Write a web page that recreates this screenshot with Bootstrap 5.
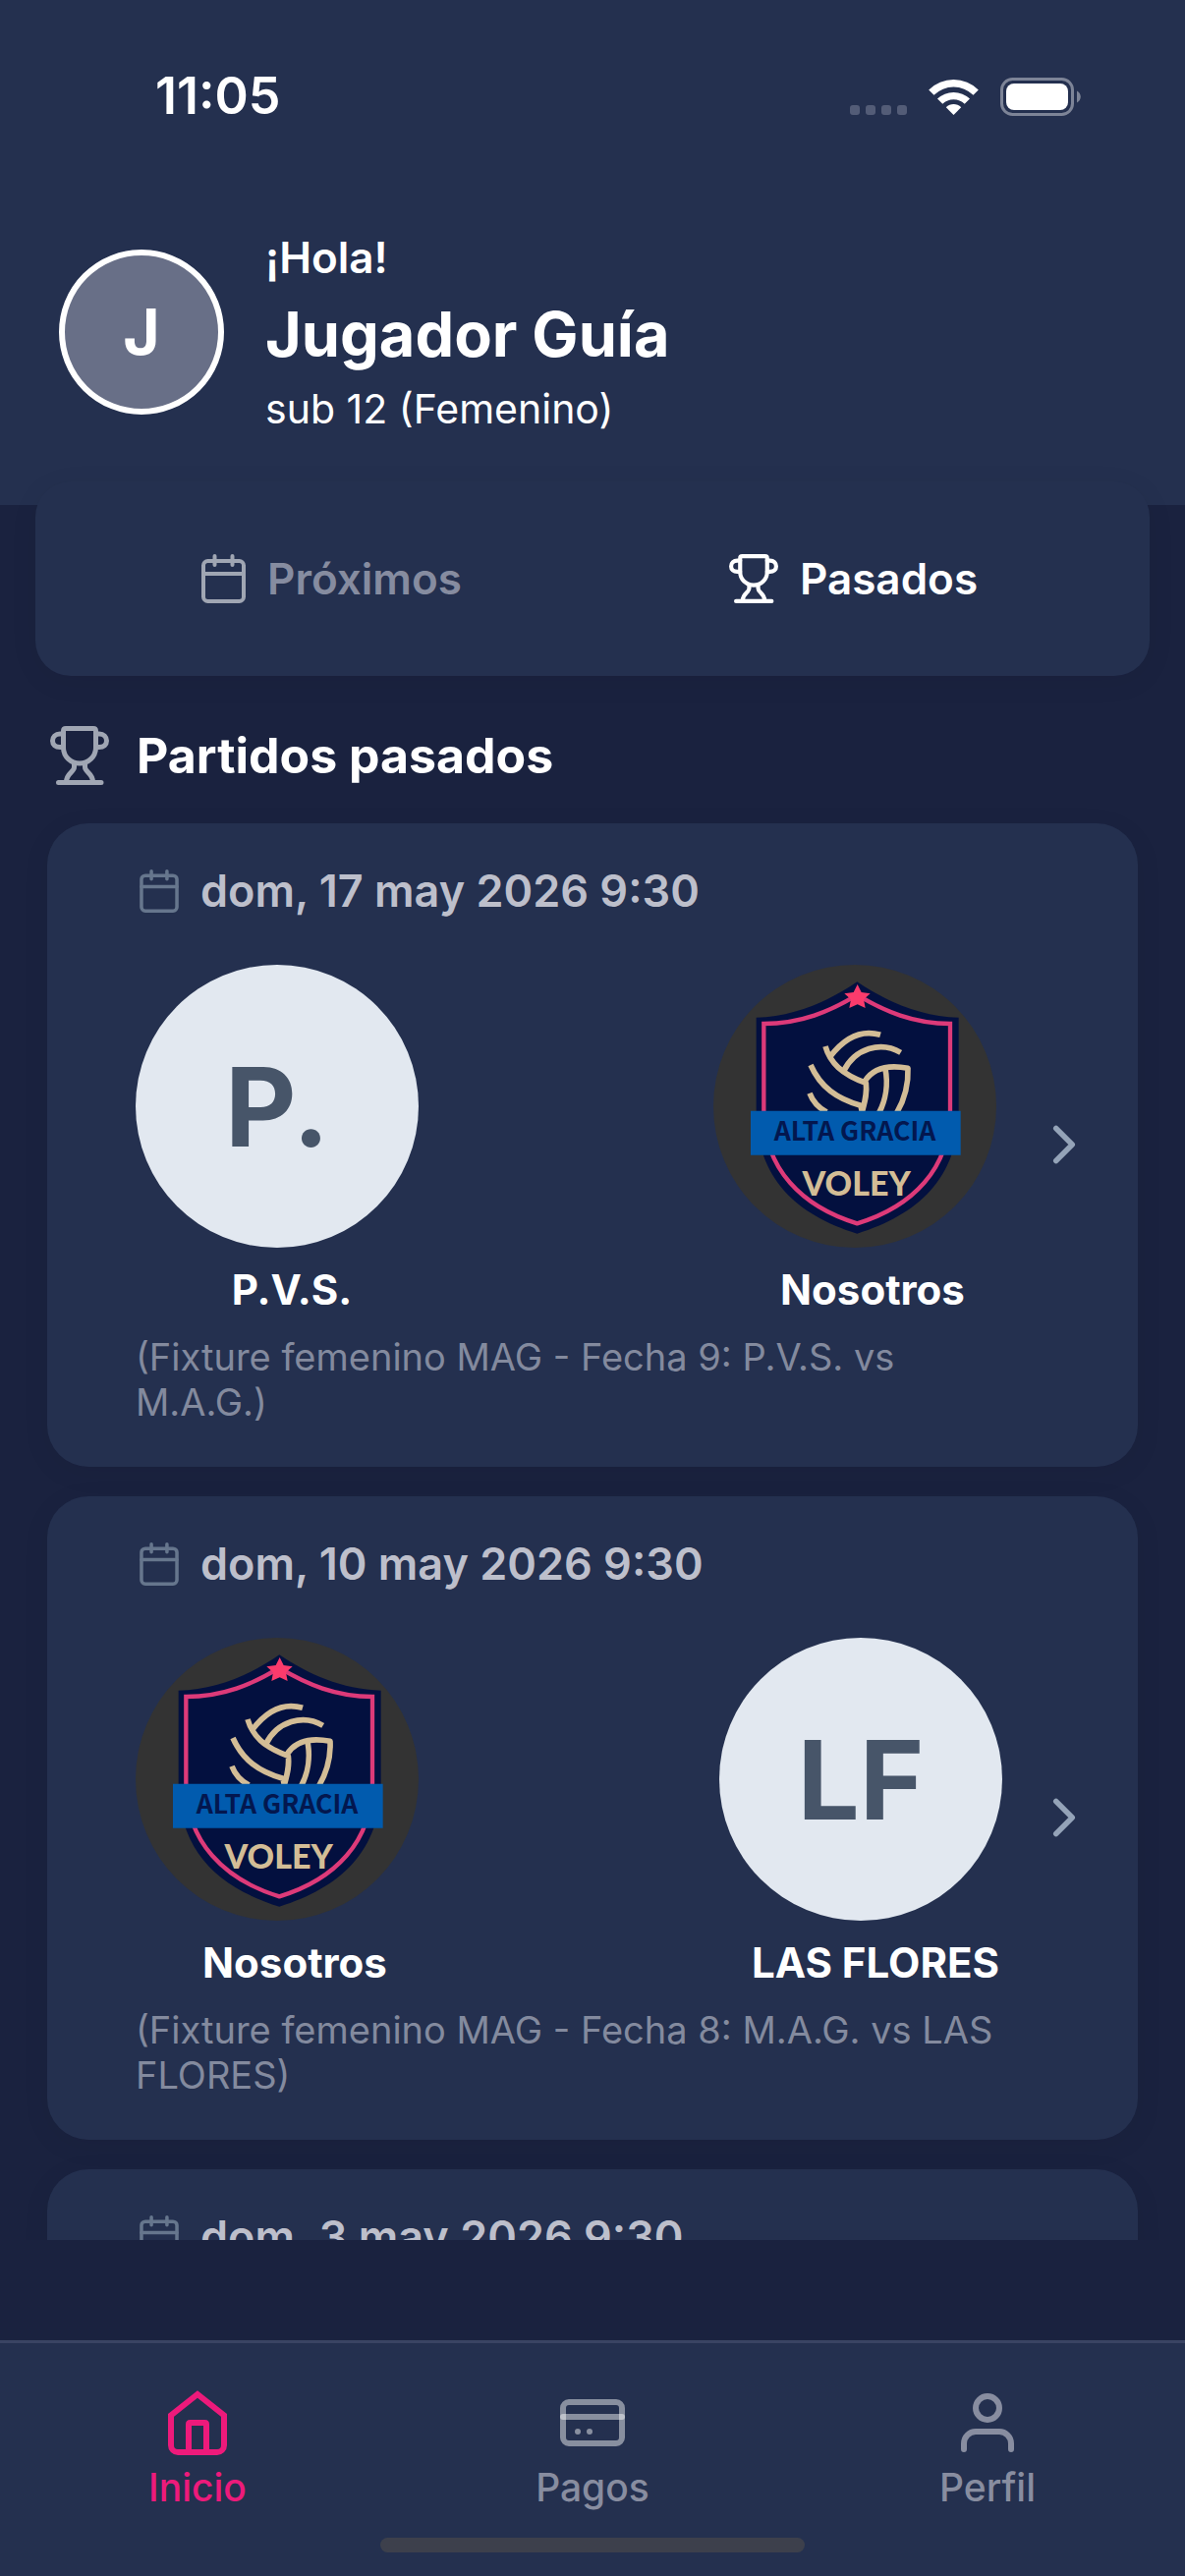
<!DOCTYPE html>
<html lang="es">
<head>
<meta charset="utf-8">
<meta name="viewport" content="width=device-width, initial-scale=1">
<title>Partidos pasados</title>
<link href="https://cdn.jsdelivr.net/npm/bootstrap@5.3.0/dist/css/bootstrap.min.css" rel="stylesheet">
<style>
  body { background: #1a223f; color: #fff; font-family: Inter, "Noto Sans", sans-serif; }
  svg { display: block; flex: none; }
  .surface { background: #24304f; }
  .status-bar { height: 196px; padding: 0 106px 0 158px; }
  .status-time { font-size: 52px; line-height: 60px; font-weight: 600; }
  .status-icons { gap: 22px; }
  .profile { gap: 42px; padding: 39px 60px 73px; }
  .avatar { width: 168px; height: 168px; border: 6px solid #fff; background: #686f87; font-size: 64px; font-weight: 700; }
  .profile-text { gap: 12px; }
  .hello { font-size: 44px; line-height: 54px; font-weight: 600; }
  .player { font-size: 63px; line-height: 78px; font-weight: 700; }
  .category { font-size: 41px; line-height: 50px; }
  .tabs { margin: -24px 36px 0; padding: 0 36px; height: 198px; border-radius: 36px; box-shadow: 0 6px 30px rgba(0, 0, 0, .06); }
  .tab-btn { gap: 22px; font-size: 44px; line-height: 54px; font-weight: 600; color: #868ca0; }
  .tab-btn:hover, .tab-btn.active { color: #fff; }
  .tab-btn svg { color: #a0a6b3; }
  .tab-btn.active svg { color: #fff; }
  .section-title { gap: 28px; padding: 50px 51px 0; }
  .section-title svg { color: #a0a6b3; }
  .section-title h1 { font-size: 50px; line-height: 62px; font-weight: 700; }
  .matches { padding: 38px 48px 0; gap: 30px; margin-bottom: 102px; }
  .match { padding: 42px 42px 43px 90px; border-radius: 42px; color: #fff; box-shadow: 0 6px 30px rgba(0, 0, 0, .06); }
  .match-date { gap: 22px; font-size: 45px; line-height: 54px; font-weight: 600; color: #bdbfcb; padding-left: 4px; margin-bottom: 48px; }
  .match-date svg { color: #66768d; }
  .team { width: 318px; }
  .team-own { width: 324px; }
  .team-logo { width: 288px; height: 288px; margin-bottom: 18px; }
  .team-initials { background: #e2e8f0; color: #475569; font-size: 112px; font-weight: 700; }
  .team-name { font-size: 42px; line-height: 50px; font-weight: 700; }
  .match-note { font-size: 38px; line-height: 46px; color: #838a9e; margin: 20px 24px 0 0; }
  .crest-band { font-family: "Noto Sans CJK SC", "Noto Sans", sans-serif; font-size: 80px; font-weight: 700; fill: #03174f; text-anchor: middle; }
  .crest-sport { font-family: Lato, sans-serif; font-size: 102px; font-weight: 900; fill: #d3bd96; text-anchor: middle; }
  .chevron { color: #94a3b8; }
  .tab-bar { border-top: 3px solid #3a4463; height: 240px; padding-top: 45px; }
  .tab-link { gap: 6px; font-size: 39px; line-height: 48px; font-weight: 500; color: #888da0; }
  .tab-link.active { color: #ed1a7b; }
  .icon-box { height: 72px; }
  .home-indicator { width: 432px; height: 15px; background: #3d404c; bottom: 24px; }
</style>
<script src="https://cdn.jsdelivr.net/npm/bootstrap@5.3.0/dist/js/bootstrap.bundle.min.js"></script>
</head>
<body>
<svg width="0" height="0" class="position-absolute" aria-hidden="true">
  <symbol id="calendar" viewBox="0 0 45 50">
    <g fill="none" stroke="currentColor" stroke-width="4" stroke-linecap="round"><rect x="2" y="7" width="41" height="41" rx="4.500"/><path d="M2 20H43M13.500 2V11M31.500 2V11"/></g>
  </symbol>
  <symbol id="trophy" viewBox="0 0 60 60">
    <g fill="none" stroke="currentColor" stroke-width="5" stroke-linecap="round" stroke-linejoin="round">
      <path d="M13.500 5Q13.500 2.500 16 2.500H44Q46.500 2.500 46.500 5V22C46.500 31 39 38 30 38S13.500 31 13.500 22Z"/>
      <path d="M13.500 8H10C5.500 8 2.500 11 2.500 15S5.500 21.500 10 21.500H13.500M46.500 8H50C54.500 8 57.500 11 57.500 15S54.500 21.500 50 21.500H46.500"/>
      <path d="M24.500 38V42C24.500 47 16.500 48 16.500 57M35.500 38V42C35.500 47 43.500 48 43.500 57M8.500 57.500H52"/>
    </g>
  </symbol>
  <symbol id="chevron" viewBox="0 0 24 24"><path d="M9 18l6-6-6-6" fill="none" stroke="currentColor" stroke-width="2" stroke-linecap="round" stroke-linejoin="round"/></symbol>
  <g id="crest">
    <circle cx="450" cy="468" r="432" fill="#333"/>
    <path d="M457 88C540 145 650 195 767 197V480C767 690 640 800 457 857C274 800 149 690 149 480V197C265 195 375 145 457 88Z" fill="#03103f"/>
    <path d="M457 128C540 178 630 216 741 216V480C741 660 625 775 457 826C290 775 172 660 172 480V216C285 216 375 178 457 128Z" fill="none" stroke="#dd3a79" stroke-width="13"/>
    <path d="M458 96L470 120L497 124L477 142L482 168L458 157L433 168L438 142L418 124L446 120Z" fill="#fb3b6c"/>
    <path d="M360 285C374 335 410 370 484 397C488 430 480 455 472 486L468 466C395 445 345 410 315 342M375 316C410 270 460 230 528 250M415 362C450 290 530 268 590 304M480 392C510 345 560 342 612 352C614 400 600 450 578 488M543 354C552 400 544 450 524 488M312 428C322 455 342 474 364 486" fill="none" stroke="#d3bd96" stroke-width="17" stroke-linejoin="round"/>
    <path d="M132 482H773V617H132Z" fill="#015bae"/>
  </g>
</svg>

<div class="vh-100 d-flex flex-column overflow-hidden">
  <header class="surface flex-shrink-0">
    <div class="status-bar d-flex align-items-center justify-content-between">
      <div class="status-time">11:05</div>
      <div class="status-icons d-flex align-items-end" aria-hidden="true">
        <svg width="58" height="11" viewBox="0 0 58 11" fill="#535c77"><rect width="10" height="10" rx="3"/><rect x="16" width="10" height="10" rx="3"/><rect x="32" width="10" height="10" rx="3"/><rect x="48" width="10" height="10" rx="3"/></svg>
        <svg width="51" height="38" viewBox="0 0 51 38" fill="#fff"><path d="M25.500 37L17.800 29.200C22 25 29 25 33.200 29.200Z"/><path d="M9 20.500A24 24 0 0 1 42 20.500L36.700 25.800A16 16 0 0 0 14.300 25.800Z"/><path d="M.2 11.400A36 36 0 0 1 50.800 11.400L45.500 16.800A28.500 28.500 0 0 0 5.500 16.800Z"/></svg>
        <svg width="82" height="39" viewBox="0 0 82 39"><rect x="1.500" y="1.500" width="72" height="36" rx="11" fill="none" stroke="#7d8497" stroke-width="3"/><rect x="6" y="6" width="63" height="27" rx="8" fill="#fff"/><path d="M78 13.500C83 16 83 23 78 25.500Z" fill="#7d8497"/></svg>
      </div>
    </div>
    <div class="profile d-flex align-items-center">
      <div class="avatar rounded-circle d-flex align-items-center justify-content-center flex-shrink-0">J</div>
      <div class="profile-text d-flex flex-column">
        <div class="hello">¡Hola!</div>
        <div class="player">Jugador Guía</div>
        <div class="category">sub 12 (Femenino)</div>
      </div>
    </div>
  </header>

  <div class="tabs surface d-flex flex-shrink-0 position-relative" role="tablist">
    <button type="button" role="tab" aria-selected="false" class="tab-btn btn border-0 flex-fill w-50 d-flex align-items-center justify-content-center"><svg width="45" height="50"><use href="#calendar"/></svg>Próximos</button>
    <button type="button" role="tab" aria-selected="true" class="tab-btn active btn border-0 flex-fill w-50 d-flex align-items-center justify-content-center"><svg width="50" height="50"><use href="#trophy"/></svg>Pasados</button>
  </div>

  <div class="section-title d-flex align-items-center flex-shrink-0">
    <svg width="60" height="60"><use href="#trophy"/></svg>
    <h1 class="m-0">Partidos pasados</h1>
  </div>

  <main class="matches d-flex flex-column flex-grow-1 overflow-hidden">
    <a href="#" class="match surface d-flex align-items-center flex-shrink-0 text-decoration-none">
      <div class="flex-grow-1">
        <div class="match-date d-flex align-items-center"><svg width="40" height="44"><use href="#calendar"/></svg>dom, 17 may 2026 9:30</div>
        <div class="d-flex justify-content-between">
          <div class="team">
            <div class="team-logo team-initials rounded-circle d-flex align-items-center justify-content-center">P.</div>
            <div class="team-name text-center">P.V.S.</div>
          </div>
          <div class="team team-own">
            <svg class="team-logo" viewBox="18 36 864 864" role="img" aria-label="Alta Gracia Voley"><use href="#crest"/><text class="crest-band" x="450" y="572">ALTA GRACIA</text><text class="crest-sport" x="455" y="740">VOLEY</text></svg>
            <div class="team-name text-center">Nosotros</div>
          </div>
        </div>
        <div class="match-note">(Fixture femenino MAG - Fecha 9: P.V.S. vs M.A.G.)</div>
      </div>
      <svg class="chevron" width="66" height="66"><use href="#chevron"/></svg>
    </a>

    <a href="#" class="match surface d-flex align-items-center flex-shrink-0 text-decoration-none">
      <div class="flex-grow-1">
        <div class="match-date d-flex align-items-center"><svg width="40" height="44"><use href="#calendar"/></svg>dom, 10 may 2026 9:30</div>
        <div class="d-flex justify-content-between">
          <div class="team team-own">
            <svg class="team-logo" viewBox="18 36 864 864" role="img" aria-label="Alta Gracia Voley"><use href="#crest"/><text class="crest-band" x="450" y="572">ALTA GRACIA</text><text class="crest-sport" x="455" y="740">VOLEY</text></svg>
            <div class="team-name text-center">Nosotros</div>
          </div>
          <div class="team">
            <div class="team-logo team-initials rounded-circle d-flex align-items-center justify-content-center">LF</div>
            <div class="team-name text-center">LAS FLORES</div>
          </div>
        </div>
        <div class="match-note">(Fixture femenino MAG - Fecha 8: M.A.G. vs LAS FLORES)</div>
      </div>
      <svg class="chevron" width="66" height="66"><use href="#chevron"/></svg>
    </a>

    <a href="#" class="match surface d-flex align-items-center flex-shrink-0 text-decoration-none">
      <div class="flex-grow-1">
        <div class="match-date d-flex align-items-center"><svg width="40" height="44"><use href="#calendar"/></svg>dom, 3 may 2026 9:30</div>
      </div>
    </a>
  </main>

  <nav class="tab-bar surface d-flex align-items-start flex-shrink-0 position-relative">
    <a href="#" class="tab-link active col-4 d-flex flex-column align-items-center text-decoration-none" aria-current="page">
      <span class="icon-box d-flex align-items-center"><svg width="60" height="66" viewBox="0 0 60 66" fill="none" stroke="currentColor" stroke-width="6"><path d="M30 4L3 25.500V56A7 7 0 0 0 10 63H50A7 7 0 0 0 57 56V25.500Z"/><path d="M21 63V34.500Q21 33 22.500 33H37.500Q39 33 39 34.500V63"/></svg></span>
      Inicio
    </a>
    <a href="#" class="tab-link col-4 d-flex flex-column align-items-center text-decoration-none">
      <span class="icon-box d-flex align-items-center"><svg width="66" height="48" viewBox="0 0 66 48" fill="none" stroke="#fff" stroke-opacity=".46" stroke-width="6" stroke-linecap="round"><rect x="3" y="3" width="60" height="42" rx="6"/><path d="M3 18H63"/><path d="M18 33h.01M30 33h.01"/></svg></span>
      Pagos
    </a>
    <a href="#" class="tab-link col-4 d-flex flex-column align-items-center text-decoration-none">
      <span class="icon-box d-flex align-items-center"><svg width="54" height="60" viewBox="0 0 54 60" fill="none" stroke="currentColor" stroke-width="6" stroke-linecap="round"><circle cx="27" cy="15" r="12"/><path d="M3 57V51A12 12 0 0 1 15 39H39A12 12 0 0 1 51 51V57"/></svg></span>
      Perfil
    </a>
    <div class="home-indicator rounded-pill position-absolute start-50 translate-middle-x"></div>
  </nav>
</div>
</body>
</html>
